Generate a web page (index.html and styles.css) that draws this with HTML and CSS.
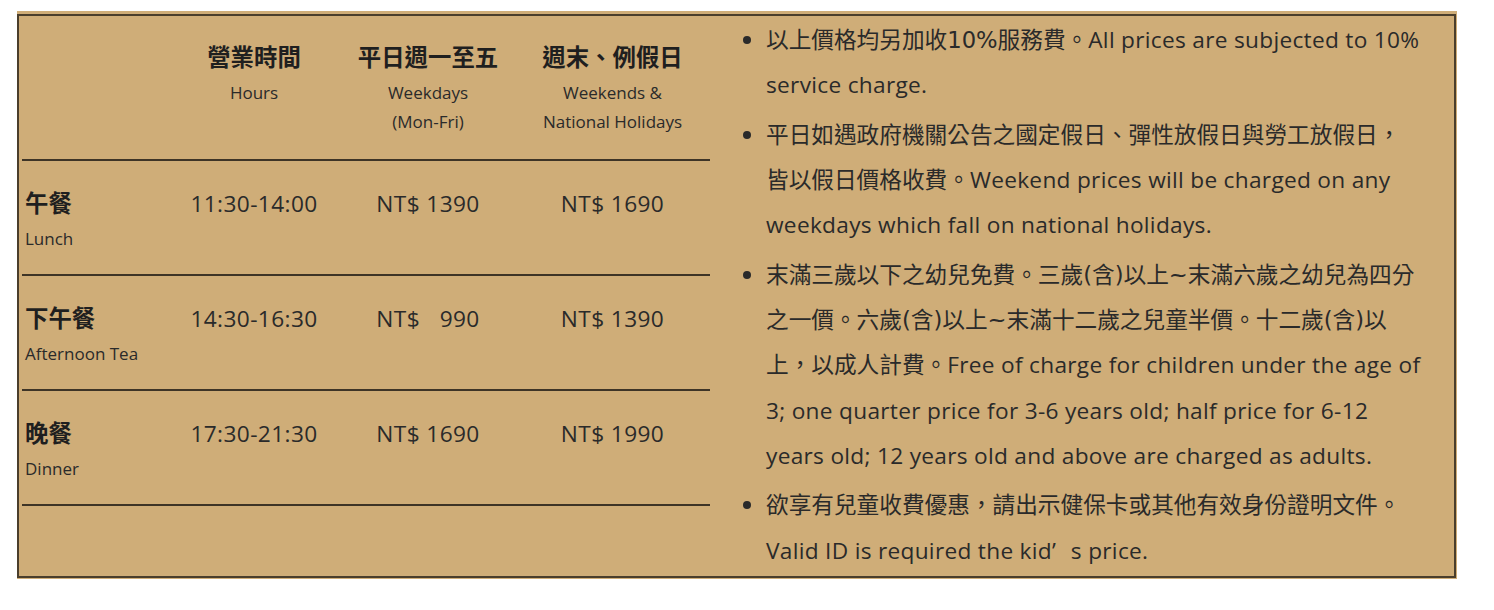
FILE: index.html
```html
<!DOCTYPE html>
<html lang="zh-Hant">
<head>
<meta charset="utf-8">
<title>Prices</title>
<link rel="stylesheet" href="styles.css">
</head>
<body>
<div class="frame">
  <div class="box">
    <div class="menu">
      <div class="row head">
        <div class="cell"></div>
        <div class="cell ctr"><div class="zh">營業時間</div><div class="en">Hours</div></div>
        <div class="cell ctr"><div class="zh">平日週一至五</div><div class="en">Weekdays<br>(Mon-Fri)</div></div>
        <div class="cell ctr"><div class="zh">週末、例假日</div><div class="en">Weekends &amp;<br>National Holidays</div></div>
      </div>
      <div class="row">
        <div class="cell lbl"><div class="zh">午餐</div><div class="en">Lunch</div></div>
        <div class="cell ctr val">11:30-14:00</div>
        <div class="cell ctr val">NT$ 1390</div>
        <div class="cell ctr val">NT$ 1690</div>
      </div>
      <div class="row">
        <div class="cell lbl"><div class="zh">下午餐</div><div class="en">Afternoon Tea</div></div>
        <div class="cell ctr val">14:30-16:30</div>
        <div class="cell ctr val">NT$ &#8199;990</div>
        <div class="cell ctr val">NT$ 1390</div>
      </div>
      <div class="row">
        <div class="cell lbl"><div class="zh">晚餐</div><div class="en">Dinner</div></div>
        <div class="cell ctr val">17:30-21:30</div>
        <div class="cell ctr val">NT$ 1690</div>
        <div class="cell ctr val">NT$ 1990</div>
      </div>
    </div>
    <ul class="notes">
      <li><span class="zh-run" lang="zh-Hant">以上價格均另加收10%服務費。</span><span class="en-run" lang="en">All prices are subjected to 10% service charge.</span></li>
      <li><span class="zh-run" lang="zh-Hant">平日如遇政府機關公告之國定假日、彈性放假日與勞工放假日，皆以假日價格收費。</span><span class="en-run" lang="en">Weekend prices will be charged on any weekdays which fall on national holidays.</span></li>
      <li><span class="zh-run" lang="zh-Hant">末滿三歲以下之幼兒免費。三歲(含)以上~末滿六歲之幼兒為四分之一價。六歲(含)以上~末滿十二歲之兒童半價。十二歲(含)以上，以成人計費。</span><span class="en-run" lang="en">Free of charge for children under the age of 3; one quarter price for 3-6 years old; half price for 6-12 years old; 12 years old and above are charged as adults.</span></li>
      <li><span class="zh-run" lang="zh-Hant">欲享有兒童收費優惠，請出示健保卡或其他有效身份證明文件。</span><span class="en-run" lang="en">Valid ID is required the kid<span class="fw">’</span>s price.</span></li>
    </ul>
  </div>
</div>
</body>
</html>
```
FILE: styles.css
```css
html, body {
  margin: 0;
  padding: 0;
  background: #ffffff;
}
body {
  font-family: "Open Sans", "Noto Sans CJK TC", sans-serif;
  color: #2a2a2a;
}
.frame {
  margin: 11px 0 0 17px;
  width: 1440px;
  background: #cfad78;
  padding: 3px 1px 1px 0;
  box-sizing: border-box;
}
.box {
  display: flex;
  align-items: flex-start;
  border: 2px solid #4a3e2c;
  background: #cfad78;
  height: 564px;
  box-sizing: border-box;
}
.menu {
  width: 688px;
  margin-left: 3px;
  flex: none;
}
.row {
  display: grid;
  grid-template-columns: 145px 174px 174px 195px;
  height: 115px;
  border-bottom: 2px solid #3e3426;
  box-sizing: border-box;
}
.row.head {
  height: 145px;
}
.cell {
  padding-top: 22px;
}
.head .cell {
  padding-top: 21px;
}
.ctr {
  text-align: center;
}
.lbl {
  padding-left: 3px;
}
.zh {
  font-size: 23.4px;
  font-weight: bold;
  line-height: 41px;
  color: #1f1f1f;
}
.en {
  font-size: 17px;
  line-height: 29px;
}
.val {
  font-size: 22.67px;
  line-height: 41px;
  letter-spacing: 0.4px;
}
.notes {
  flex: 1;
  margin: 1px 0 0;
  padding: 0 32px 0 56px;
  font-size: 22.67px;
  line-height: 45.33px;
}
.notes li {
  margin-bottom: 4px;
}
.zh-run {
  font-family: "DejaVu Sans", "Noto Sans CJK TC", sans-serif;
  line-height: 1;
}
.en-run {
  letter-spacing: 0.3px;
}
.fw {
  padding-right: 0.65em;
}
```
